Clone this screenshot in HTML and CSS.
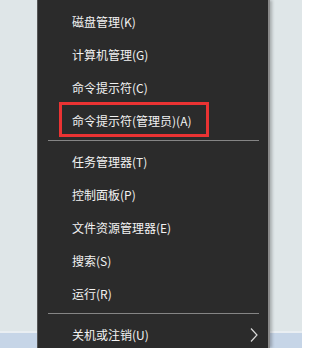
FILE: index.html
```html
<!DOCTYPE html>
<html lang="zh-CN">
<head>
<meta charset="utf-8">
<title>Win+X 菜单</title>
<link rel="stylesheet" href="styles.css">
</head>
<body>
<div class="desktop">
  <div class="desk-area"></div>
  <div class="taskbar"></div>
</div>
<div class="menu">
  <div class="item">磁盘管理(K)</div>
  <div class="item">计算机管理(G)</div>
  <div class="item">命令提示符(C)</div>
  <div class="item marked">命令提示符(管理员)(A)<span class="highlight"></span></div>
  <div class="sep"></div>
  <div class="item">任务管理器(T)</div>
  <div class="item">控制面板(P)</div>
  <div class="item">文件资源管理器(E)</div>
  <div class="item">搜索(S)</div>
  <div class="item">运行(R)</div>
  <div class="sep"></div>
  <div class="item sub"><span>关机或注销(U)</span>
    <svg class="chev" width="8" height="14" viewBox="0 0 8 14"><polyline points="1,0.5 7,7 1,13.5" fill="none" stroke="#d8d8d8" stroke-width="1.2"/></svg>
  </div>
</div>
</body>
</html>
```
FILE: styles.css
```css
html, body {
  margin: 0;
  padding: 0;
  width: 302px;
  height: 348px;
  overflow: hidden;
}
body {
  position: relative;
  font-family: "Noto Sans CJK SC", "Noto Sans", sans-serif;
  font-size: 12px;
}
.desktop {
  display: flex;
  flex-direction: column;
  height: 348px;
}
.desk-area {
  height: 331px;
  background: #dfe6e8;
}
.taskbar {
  flex: 1;
  background: #c6d5e7;
  border-top: 2px solid #e9eef2;
}
.menu {
  position: absolute;
  left: 37px;
  top: 0;
  width: 231px;
  height: 348px;
  box-sizing: border-box;
  background: #2b2b2b;
  border-left: 1px solid #555;
  padding-top: 5px;
  box-shadow: 2px 0 0 #8a8a8a, 4px 0 3px rgba(0,0,0,0.25);
}
.item {
  position: relative;
  height: 33px;
  display: flex;
  align-items: center;
  justify-content: space-between;
  padding: 0 10px 0 34px;
  color: #f2f2f2;
  white-space: nowrap;
}
.highlight {
  position: absolute;
  left: 21px;
  top: -2px;
  width: 150px;
  height: 35px;
  box-sizing: border-box;
  border: 3px solid #ea3333;
}
.sep {
  height: 1px;
  background: #858585;
  margin: 3px 9px 4px 10px;
}
.chev {
  display: block;
  margin-top: 1px;
}
```
